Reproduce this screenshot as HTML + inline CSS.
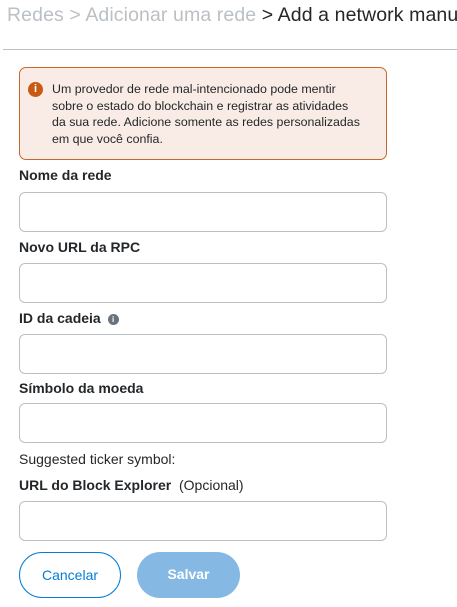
<!DOCTYPE html>
<html><head><meta charset="utf-8"><style>
*{margin:0;padding:0;box-sizing:border-box}
body{width:457px;height:607px;background:#fff;font-family:"Liberation Sans",sans-serif;color:#24272a;position:relative;overflow:hidden}
.a{position:absolute;white-space:nowrap}
.crumb{left:7px;top:4px;width:450px;overflow:hidden;font-size:19.5px;color:#bbc0c5;letter-spacing:0.1px}
.crumb b{font-weight:normal;color:#24272a}
.sep{left:3px;right:0;top:49px;height:1px;background:#bbc0c5}
.alert{left:19px;top:67px;width:368px;height:93px;border:1px solid #c8662e;background:#f9ece6;border-radius:7px}
.alert .t{position:absolute;left:32px;top:13px;font-size:12.4px;line-height:16.5px;color:#24272a;white-space:nowrap}
.ic{position:absolute;left:8px;top:14px;width:15px;height:15px;border-radius:50%;background:#c85a14;color:#fff;font-weight:bold;font-size:11px;text-align:center;line-height:15px}
.lbl{font-size:14px;font-weight:bold;left:19px}
.in{position:absolute;left:19px;width:368px;height:40px;border:1px solid #bbc0c5;border-radius:6px}
.btn{position:absolute;top:552px;height:46px;border-radius:23px;font-size:14px;text-align:center;line-height:44px}
</style></head><body>
<div class="a crumb">Redes &gt; Adicionar uma rede <b>&gt; Add a network manually</b></div>
<div class="a sep"></div>
<div class="a alert"><div class="ic">i</div><div class="t">Um provedor de rede mal-intencionado pode mentir<br>sobre o estado do blockchain e registrar as atividades<br>da sua rede. Adicione somente as redes personalizadas<br>em que você confia.</div></div>
<div class="a lbl" style="top:167px">Nome da rede</div>
<div class="in" style="top:192px"></div>
<div class="a lbl" style="top:239px">Novo URL da RPC</div>
<div class="in" style="top:263px"></div>
<div class="a lbl" style="top:310px">ID da cadeia <span style="display:inline-block;width:11px;height:11px;border-radius:50%;background:#6a737d;color:#fff;font-size:8px;line-height:11px;text-align:center;vertical-align:1px;margin-left:3px">i</span></div>
<div class="in" style="top:334px"></div>
<div class="a lbl" style="top:380px">Símbolo da moeda</div>
<div class="in" style="top:403px"></div>
<div class="a" style="left:19px;top:451px;font-size:14px">Suggested ticker symbol:</div>
<div class="a lbl" style="top:477px">URL do Block Explorer <span style="font-weight:normal">&nbsp;(Opcional)</span></div>
<div class="in" style="top:501px"></div>
<div class="btn" style="left:19px;width:102px;border:1px solid #037dd6;color:#037dd6">Cancelar</div>
<div class="btn" style="left:137px;width:103px;background:#85b9e4;color:#fff;font-weight:bold">Salvar</div>
</body></html>
